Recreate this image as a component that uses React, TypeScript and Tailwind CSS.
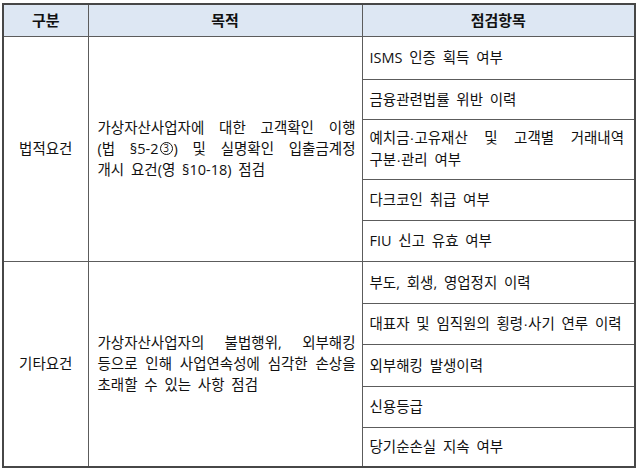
const rightRows = [
  { h: 'h-[43px]', lines: ['ISMS 인증 획득 여부'] },
  { h: 'h-[40px]', lines: ['금융관련법률 위반 이력'] },
  { h: 'h-[60px]', lines: ['예치금·고유재산 및 고객별 거래내역', '구분·관리 여부'] },
  { h: 'h-[41px]', lines: ['다크코인 취급 여부'] },
  { h: 'h-[41px]', lines: ['FIU 신고 유효 여부'] },
  { h: 'h-[42px]', lines: ['부도, 회생, 영업정지 이력'] },
  { h: 'h-[41px]', lines: ['대표자 및 임직원의 횡령·사기 연루 이력'] },
  { h: 'h-[42px]', lines: ['외부해킹 발생이력'] },
  { h: 'h-[41px]', lines: ['신용등급'] },
  { h: 'h-[40px]', lines: ['당기순손실 지속 여부'] },
];

const groups = [
  {
    label: '법적요건',
    purpose: ['가상자산사업자에 대한 고객확인 이행', '(법 §5-2③) 및 실명확인 입출금계정', '개시 요건(영 §10-18) 점검'],
    start: 0,
    count: 5,
  },
  {
    label: '기타요건',
    purpose: ['가상자산사업자의 불법행위, 외부해킹', '등으로 인해 사업연속성에 심각한 손상을', '초래할 수 있는 사항 점검'],
    start: 5,
    count: 5,
  },
];

// ③ drawn as a small ring around the digit; middle dot kept narrow
function Text({ s }: { s: string }) {
  const parts = s.split(/(③|·)/);
  return (
    <>
      {parts.map((p, i) =>
        p === '③' ? (
          <span
            key={i}
            className="inline-flex items-center justify-center w-[13px] h-[13px] mx-[1px] rounded-full border border-[#111] text-[10px] leading-none align-[2px]"
          >
            3
          </span>
        ) : p === '·' ? (
          <span key={i} style={{ fontFamily: '"Liberation Sans", sans-serif' }}>·</span>
        ) : (
          <span key={i}>{p}</span>
        )
      )}
    </>
  );
}

function Lines({ lines }: { lines: string[] }) {
  return (
    <>
      {lines.map((l, i) => (
        <div
          key={i}
          className={
            'whitespace-nowrap ' +
            (i < lines.length - 1 ? 'text-justify [text-align-last:justify]' : '')
          }
        >
          <Text s={l} />
        </div>
      ))}
    </>
  );
}

export default function App() {
  const cell = 'border border-[#5c5c5c]';

  return (
    <div
      className="w-[640px] h-[471px] bg-white pl-[2px] pt-[3px] text-[14.5px] leading-[21px] text-[#111] [word-spacing:3px]"
      style={{ fontFamily: '"Open Sans", "Noto Sans CJK KR", sans-serif' }}
    >
      <table className="w-[632px] table-fixed border-collapse border-2 border-[#474747]">
        <colgroup>
          <col className="w-[85px]" />
          <col className="w-[274px]" />
          <col className="w-[273px]" />
        </colgroup>
        <thead>
          <tr className="h-[32px] bg-[#dde7f3] font-bold">
            <th className={cell + ' text-center text-[15px]'}>구분</th>
            <th className={cell + ' text-center text-[15px]'}>목적</th>
            <th className={cell + ' text-center text-[15px]'}>점검항목</th>
          </tr>
        </thead>
        <tbody>
          {rightRows.map((r, i) => {
            const g = groups.find(gr => gr.start === i);
            return (
              <tr key={i} className={r.h}>
                {g && (
                  <>
                    <td rowSpan={g.count} className={cell + ' text-center align-middle'}>
                      {g.label}
                    </td>
                    <td rowSpan={g.count} className={cell + ' align-middle pl-[9px] pr-[6px]'}>
                      <Lines lines={g.purpose} />
                    </td>
                  </>
                )}
                <td className={cell + ' align-middle pl-[7px] pr-[10px]'}>
                  <Lines lines={r.lines} />
                </td>
              </tr>
            );
          })}
        </tbody>
      </table>
    </div>
  );
}
